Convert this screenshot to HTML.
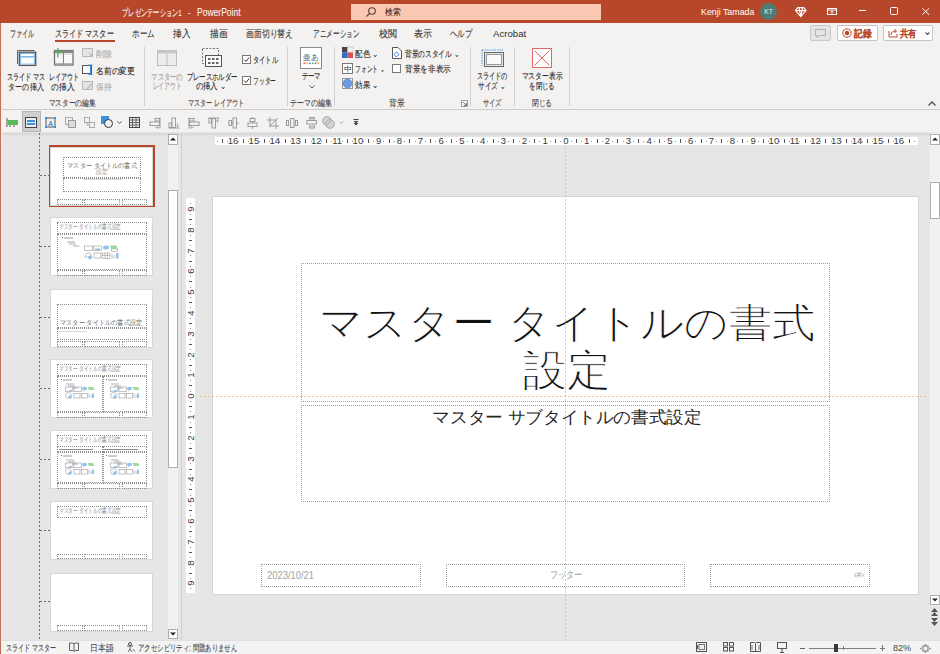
<!DOCTYPE html>
<html><head><meta charset="utf-8">
<style>
*{margin:0;padding:0;box-sizing:border-box}
html,body{width:940px;height:654px;overflow:hidden;background:#e6e6e6;font-family:"Liberation Sans",sans-serif;position:relative}
.a{position:absolute}
.t{position:absolute;white-space:nowrap;line-height:1}
svg{overflow:visible}
</style></head><body>

<div class="a" style="left:0px;top:0px;width:940px;height:23px;background:#b7472a"></div>
<div class="t" id="t1" style="left:122.3px;top:12.5px;font-size:9.5px;color:#ffffff;-webkit-text-stroke:0.1px #ffffff;transform-origin:0 50%;transform:translateY(-50%) scaleX(0.6254);">プレゼンテーション1</div>
<div class="t" id="t2" style="left:189.4px;top:12.5px;font-size:9.5px;color:#ffffff;transform-origin:50% 50%;transform:translate(-50%,-50%);">-</div>
<div class="t" id="t3" style="left:196.8px;top:12.5px;font-size:10px;color:#ffffff;transform-origin:0 50%;transform:translateY(-50%) scaleX(0.8526);">PowerPoint</div>
<div class="a" style="left:351px;top:4px;width:250px;height:16px;background:#fbc8b3"></div>
<svg class="a" style="left:365px;top:6px;" width="12" height="12" viewBox="0 0 12 12"><circle cx="7" cy="5" r="3.3" fill="none" stroke="#5a3a30" stroke-width="1.1"/><line x1="4.6" y1="7.4" x2="1.5" y2="10.5" stroke="#5a3a30" stroke-width="1.2"/></svg>
<div class="t" id="t4" style="left:385.3px;top:12px;font-size:9px;color:#4a2a20;-webkit-text-stroke:0.1px #4a2a20;transform-origin:0 50%;transform:translateY(-50%) scaleX(0.8722);">検索</div>
<div class="t" id="t5" style="left:700.6px;top:12px;font-size:9.5px;color:#ffffff;transform-origin:0 50%;transform:translateY(-50%) scaleX(0.9305);">Kenji Tamada</div>
<div class="a" style="left:760px;top:3px;width:17px;height:17px;border-radius:50%;background:#4e7b74"></div>
<div class="t" id="t6" style="left:768.5px;top:11.5px;font-size:6.5px;color:#e8f0ee;transform-origin:50% 50%;transform:translate(-50%,-50%);">KT</div>
<svg class="a" style="left:795px;top:7px;" width="11.5" height="10" viewBox="0 0 11.5 10"><path d="M2.8 0.6 L8.7 0.6 L11 3.6 L5.75 9.6 L0.5 3.6 Z M0.5 3.6 L11 3.6 M4 0.6 L5.75 9.6 L7.5 0.6" fill="none" stroke="#fff" stroke-width="1.1"/></svg>
<svg class="a" style="left:827px;top:7.5px;" width="10" height="7" viewBox="0 0 10 7"><rect x="0.5" y="0.5" width="9" height="6" fill="none" stroke="#fff" stroke-width="1"/><line x1="0.5" y1="2" x2="9.5" y2="2" stroke="#fff"/><path d="M3.5 4.5 L5 3 L6.5 4.5 M5 3 L5 6.5" fill="none" stroke="#fff" stroke-width="0.9"/></svg>
<div class="a" style="left:859px;top:10px;width:7px;height:1px;background:#fff"></div>
<div class="a" style="left:890px;top:7px;width:8px;height:7.5px;border:1px solid #fff;border-radius:1.5px"></div>
<svg class="a" style="left:921.6px;top:7.6px;" width="7.4" height="7" viewBox="0 0 7.4 7"><path d="M0.3 0.3 L7.1 6.7 M7.1 0.3 L0.3 6.7" stroke="#fff" stroke-width="1"/></svg>
<div class="a" style="left:0px;top:23px;width:940px;height:87px;background:#f3f2f1"></div>
<div class="t" id="t7" style="left:10.2px;top:34.2px;font-size:9.5px;color:#303030;-webkit-text-stroke:0.1px #303030;transform-origin:0 50%;transform:translateY(-50%) scaleX(0.6075);">ファイル</div>
<div class="t" id="t8" style="left:54.9px;top:34.2px;font-size:9.5px;color:#303030;-webkit-text-stroke:0.1px #303030;transform-origin:0 50%;transform:translateY(-50%) scaleX(0.7103);">スライド マスター</div>
<div class="t" id="t9" style="left:132.3px;top:34.2px;font-size:9.5px;color:#303030;-webkit-text-stroke:0.1px #303030;transform-origin:0 50%;transform:translateY(-50%) scaleX(0.7533);">ホーム</div>
<div class="t" id="t10" style="left:173.4px;top:34.2px;font-size:9.5px;color:#303030;-webkit-text-stroke:0.1px #303030;transform-origin:0 50%;transform:translateY(-50%) scaleX(0.8800);">挿入</div>
<div class="t" id="t11" style="left:209.6px;top:34.2px;font-size:9.5px;color:#303030;-webkit-text-stroke:0.1px #303030;transform-origin:0 50%;transform:translateY(-50%) scaleX(0.8700);">描画</div>
<div class="t" id="t12" style="left:246px;top:34.2px;font-size:9.5px;color:#303030;-webkit-text-stroke:0.1px #303030;transform-origin:0 50%;transform:translateY(-50%) scaleX(0.7867);">画面切り替え</div>
<div class="t" id="t13" style="left:312.8px;top:34.2px;font-size:9.5px;color:#303030;-webkit-text-stroke:0.1px #303030;transform-origin:0 50%;transform:translateY(-50%) scaleX(0.6629);">アニメーション</div>
<div class="t" id="t14" style="left:378.6px;top:34.2px;font-size:9.5px;color:#303030;-webkit-text-stroke:0.1px #303030;transform-origin:0 50%;transform:translateY(-50%) scaleX(0.8950);">校閲</div>
<div class="t" id="t15" style="left:414.1px;top:34.2px;font-size:9.5px;color:#303030;-webkit-text-stroke:0.1px #303030;transform-origin:0 50%;transform:translateY(-50%) scaleX(0.8950);">表示</div>
<div class="t" id="t16" style="left:450.1px;top:34.2px;font-size:9.5px;color:#303030;-webkit-text-stroke:0.1px #303030;transform-origin:0 50%;transform:translateY(-50%) scaleX(0.7400);">ヘルプ</div>
<div class="t" id="t17" style="left:492.7px;top:34.2px;font-size:9.5px;color:#303030;transform-origin:0 50%;transform:translateY(-50%) scaleX(1.0168);">Acrobat</div>
<div class="a" style="left:55px;top:40px;width:60px;height:2px;background:#b7472a"></div>
<div class="a" style="left:810px;top:25px;width:21px;height:16px;background:#e4e4e4;border:1px solid #c8c8c8;border-radius:2px"></div>
<svg class="a" style="left:815px;top:29px;" width="11" height="9" viewBox="0 0 11 9"><path d="M0.5 0.5 H10.5 V6.5 H4 L2 8.5 V6.5 H0.5 Z" fill="none" stroke="#b0b0b0"/></svg>
<div class="a" style="left:837px;top:25px;width:41px;height:16px;background:#fff;border:1px solid #c4c4c4;border-radius:2px"></div>
<svg class="a" style="left:842px;top:28px;" width="10" height="10" viewBox="0 0 10 10"><circle cx="5" cy="5" r="4.2" fill="none" stroke="#b7472a" stroke-width="1"/><circle cx="5" cy="5" r="2.2" fill="#b7472a"/></svg>
<div class="t" id="t18" style="left:853.6px;top:33.8px;font-size:9.5px;color:#b7472a;-webkit-text-stroke:0.1px #b7472a;transform-origin:0 50%;transform:translateY(-50%) scaleX(0.8650);font-weight:bold">記録</div>
<div class="a" style="left:883px;top:25px;width:50px;height:16px;background:#fff;border:1px solid #c4c4c4;border-radius:2px"></div>
<svg class="a" style="left:888px;top:27px;" width="11" height="11" viewBox="0 0 11 11"><path d="M1 4 V10 H9 V7" fill="none" stroke="#b7472a"/><path d="M3 8 C3 5 5 4 8 4 M6.5 2 L8.5 4 L6.5 6" fill="none" stroke="#b7472a"/></svg>
<div class="t" id="t19" style="left:900px;top:33.8px;font-size:9.5px;color:#b7472a;-webkit-text-stroke:0.1px #b7472a;transform-origin:0 50%;transform:translateY(-50%) scaleX(0.8300);font-weight:bold">共有</div>
<svg class="a" style="left:924.5px;top:31.5px;" width="5" height="3" viewBox="0 0 5 3"><path d="M0.5 0.5 L2.5 2.5 L4.5 0.5" fill="none" stroke="#555" stroke-width="1.1"/></svg>
<div class="a" style="left:144px;top:47px;width:1px;height:59px;background:#cfcfcf"></div>
<div class="a" style="left:287px;top:47px;width:1px;height:59px;background:#cfcfcf"></div>
<div class="a" style="left:334px;top:47px;width:1px;height:59px;background:#cfcfcf"></div>
<div class="a" style="left:470px;top:47px;width:1px;height:59px;background:#cfcfcf"></div>
<div class="a" style="left:514px;top:47px;width:1px;height:59px;background:#cfcfcf"></div>
<div class="a" style="left:569px;top:47px;width:1px;height:59px;background:#cfcfcf"></div>
<div class="t" id="t20" style="left:72.2px;top:103px;font-size:9px;color:#444;-webkit-text-stroke:0.1px #444;transform-origin:50% 50%;transform:translate(-50%,-50%) scaleX(0.7460);">マスターの編集</div>
<div class="t" id="t21" style="left:216.2px;top:103px;font-size:9px;color:#444;-webkit-text-stroke:0.1px #444;transform-origin:50% 50%;transform:translate(-50%,-50%) scaleX(0.6825);">マスター レイアウト</div>
<div class="t" id="t22" style="left:310.7px;top:103px;font-size:9px;color:#444;-webkit-text-stroke:0.1px #444;transform-origin:50% 50%;transform:translate(-50%,-50%) scaleX(0.7667);">テーマの編集</div>
<div class="t" id="t23" style="left:396.9px;top:103px;font-size:9px;color:#444;-webkit-text-stroke:0.1px #444;transform-origin:50% 50%;transform:translate(-50%,-50%) scaleX(0.8778);">背景</div>
<div class="t" id="t24" style="left:492.4px;top:103px;font-size:9px;color:#444;-webkit-text-stroke:0.1px #444;transform-origin:50% 50%;transform:translate(-50%,-50%) scaleX(0.6926);">サイズ</div>
<div class="t" id="t25" style="left:541.8px;top:103px;font-size:9px;color:#444;-webkit-text-stroke:0.1px #444;transform-origin:50% 50%;transform:translate(-50%,-50%) scaleX(0.7593);">閉じる</div>
<svg class="a" style="left:461px;top:100px;" width="7" height="7" viewBox="0 0 7 7"><path d="M0.5 0.5 H6.5 V6.5 H0.5 Z" fill="none" stroke="#888" stroke-width="0.8"/><path d="M2 2 L5.5 5.5 M5.5 3 V5.5 H3" fill="none" stroke="#666" stroke-width="0.8"/></svg>
<svg class="a" style="left:928px;top:101px;" width="8" height="5" viewBox="0 0 8 5"><path d="M0.5 4.5 L4 1 L7.5 4.5" fill="none" stroke="#505050" stroke-width="1.3"/></svg>
<div class="a" style="left:0px;top:109px;width:940px;height:1px;background:#cfcdcb"></div>
<svg class="a" style="left:16px;top:49px;" width="21" height="18" viewBox="0 0 21 18"><path d="M1.5 15 V1.5 H18.5" fill="none" stroke="#666" stroke-width="1"/><rect x="3.3" y="3.2" width="16.4" height="13.2" fill="#fff" stroke="#555" stroke-width="1.3"/><rect x="4.6" y="4.5" width="13.8" height="10.6" fill="none" stroke="#7db8ee" stroke-width="1"/><rect x="4.6" y="7" width="13.8" height="1.6" fill="#7db8ee"/></svg>
<div class="t" id="t26" style="left:26.2px;top:76.5px;font-size:9px;color:#262626;-webkit-text-stroke:0.1px #262626;transform-origin:50% 50%;transform:translate(-50%,-50%) scaleX(0.6812);">スライド マス</div>
<div class="t" id="t27" style="left:26.3px;top:87px;font-size:9px;color:#262626;-webkit-text-stroke:0.1px #262626;transform-origin:50% 50%;transform:translate(-50%,-50%) scaleX(0.7778);">ターの挿入</div>
<svg class="a" style="left:53px;top:48px;" width="21" height="19" viewBox="0 0 21 19"><rect x="1.5" y="2.5" width="18.5" height="14.5" fill="#f8f8f8" stroke="#666" stroke-width="1.2"/><rect x="1.5" y="2.5" width="18.5" height="2.5" fill="#8a8a8a"/><line x1="1.5" y1="6" x2="20" y2="6" stroke="#bbb" stroke-width="0.8"/><line x1="10.4" y1="5" x2="10.4" y2="17" stroke="#777"/><line x1="1.5" y1="15.8" x2="20" y2="15.8" stroke="#999" stroke-width="1"/><path d="M4.9 0 V9.5 M0 4.5 H10" stroke="#4caf50" stroke-width="1.2"/></svg>
<div class="t" id="t28" style="left:63.9px;top:76.5px;font-size:9px;color:#262626;-webkit-text-stroke:0.1px #262626;transform-origin:50% 50%;transform:translate(-50%,-50%) scaleX(0.6733);">レイアウト</div>
<div class="t" id="t29" style="left:63.4px;top:87px;font-size:9px;color:#262626;-webkit-text-stroke:0.1px #262626;transform-origin:50% 50%;transform:translate(-50%,-50%) scaleX(0.8556);">の挿入</div>
<svg class="a" style="left:82px;top:48px;" width="12" height="10" viewBox="0 0 12 10"><rect x="0.5" y="0.5" width="10" height="8" fill="#e4e4e4" stroke="#b8b8b8"/><path d="M7 5 L11 9 M11 5 L7 9" stroke="#b8b8b8"/></svg>
<div class="t" id="t30" style="left:95.7px;top:54px;font-size:9px;color:#a8a8a8;-webkit-text-stroke:0.1px #a8a8a8;transform-origin:0 50%;transform:translateY(-50%) scaleX(0.8889);">削除</div>
<svg class="a" style="left:82px;top:65px;" width="12" height="10" viewBox="0 0 12 10"><rect x="0.5" y="0.5" width="9" height="8" fill="#fafafa" stroke="#555"/><path d="M8.5 0 V9.5 M6.5 0 H10.5 M6.5 9.5 H10.5" stroke="#3d8fe0" stroke-width="1.1"/></svg>
<div class="t" id="t31" style="left:95.7px;top:70.7px;font-size:9px;color:#262626;-webkit-text-stroke:0.1px #262626;transform-origin:0 50%;transform:translateY(-50%) scaleX(0.8667);">名前の変更</div>
<svg class="a" style="left:82px;top:81px;" width="12" height="10" viewBox="0 0 12 10"><rect x="0.5" y="0.5" width="10" height="8" fill="#e4e4e4" stroke="#b8b8b8"/><path d="M5 8 L10 3" stroke="#b8b8b8" stroke-width="1.2"/></svg>
<div class="t" id="t32" style="left:95.7px;top:86.7px;font-size:9px;color:#a8a8a8;-webkit-text-stroke:0.1px #a8a8a8;transform-origin:0 50%;transform:translateY(-50%) scaleX(0.8611);">保持</div>
<svg class="a" style="left:157px;top:50px;" width="20" height="16" viewBox="0 0 20 16"><rect x="0.5" y="0.5" width="19" height="15" fill="#ececec" stroke="#bdbdbd"/><rect x="0.5" y="0.5" width="19" height="3" fill="#c8c8c8"/><line x1="10" y1="3.5" x2="10" y2="15.5" stroke="#bdbdbd"/></svg>
<div class="t" id="t33" style="left:166.8px;top:76.6px;font-size:9px;color:#a0a0a0;-webkit-text-stroke:0.1px #a0a0a0;transform-origin:50% 50%;transform:translate(-50%,-50%) scaleX(0.7000);">マスターの</div>
<div class="t" id="t34" style="left:167.2px;top:86px;font-size:9px;color:#a0a0a0;-webkit-text-stroke:0.1px #a0a0a0;transform-origin:50% 50%;transform:translate(-50%,-50%) scaleX(0.6422);">レイアウト</div>
<svg class="a" style="left:201px;top:48px;" width="22" height="20" viewBox="0 0 22 20"><rect x="1.5" y="0.5" width="16" height="15" fill="none" stroke="#777" stroke-dasharray="2,1.5"/><rect x="4.5" y="7.5" width="16" height="11" fill="#fafafa" stroke="#555"/><g fill="#666"><rect x="7" y="10" width="2.5" height="2"/><rect x="11" y="10" width="2.5" height="2"/><rect x="15" y="10" width="2.5" height="2"/><rect x="7" y="14" width="2.5" height="2"/><rect x="11" y="14" width="2.5" height="2"/><rect x="15" y="14" width="2.5" height="2"/></g></svg>
<div class="t" id="t35" style="left:211.5px;top:76.6px;font-size:9px;color:#262626;-webkit-text-stroke:0.1px #262626;transform-origin:50% 50%;transform:translate(-50%,-50%) scaleX(0.7083);">プレースホルダー</div>
<div class="t" id="t36" style="left:211.4px;top:86px;font-size:9px;color:#262626;-webkit-text-stroke:0.1px #262626;transform-origin:50% 50%;transform:translate(-50%,-50%) scaleX(0.8210);">の挿入 ⌄</div>
<div class="a" style="left:242px;top:55px;width:9px;height:9px;background:#fff;border:1px solid #777"></div>
<svg class="a" style="left:243px;top:56px;" width="7" height="7" viewBox="0 0 7 7"><path d="M1 3.5 L3 5.5 L6.2 1.5" fill="none" stroke="#333" stroke-width="1"/></svg>
<div class="t" id="t37" style="left:253px;top:60.4px;font-size:9px;color:#262626;-webkit-text-stroke:0.1px #262626;transform-origin:0 50%;transform:translateY(-50%) scaleX(0.6944);">タイトル</div>
<div class="a" style="left:242px;top:76px;width:9px;height:9px;background:#fff;border:1px solid #777"></div>
<svg class="a" style="left:243px;top:77px;" width="7" height="7" viewBox="0 0 7 7"><path d="M1 3.5 L3 5.5 L6.2 1.5" fill="none" stroke="#333" stroke-width="1"/></svg>
<div class="t" id="t38" style="left:253px;top:80.8px;font-size:9px;color:#262626;-webkit-text-stroke:0.1px #262626;transform-origin:0 50%;transform:translateY(-50%) scaleX(0.6389);">フッター</div>
<svg class="a" style="left:300px;top:47px;" width="22" height="22" viewBox="0 0 22 22"><rect x="0.5" y="0.5" width="21" height="21" fill="#fff" stroke="#8a8a8a"/><g><rect x="3.5" y="15.5" width="1.6" height="1.6" fill="#d9534f"/><rect x="6.3" y="15.5" width="1.6" height="1.6" fill="#e8a33d"/><rect x="9.1" y="15.5" width="1.6" height="1.6" fill="#3c8dde"/><rect x="11.9" y="15.5" width="1.6" height="1.6" fill="#6ab04c"/><rect x="14.7" y="15.5" width="1.6" height="1.6" fill="#3c8dde"/><rect x="17.5" y="15.5" width="1.6" height="1.6" fill="#e8a33d"/></g></svg>
<div class="t" id="t39" style="left:311px;top:58px;font-size:7.5px;color:#555;transform-origin:50% 50%;transform:translate(-50%,-50%) scaleX(0.9688);-webkit-text-stroke:0">亜あ</div>
<div class="t" id="t40" style="left:310.5px;top:76.4px;font-size:9px;color:#262626;-webkit-text-stroke:0.1px #262626;transform-origin:50% 50%;transform:translate(-50%,-50%) scaleX(0.7037);">テーマ</div>
<svg class="a" style="left:309px;top:85px;" width="6" height="4" viewBox="0 0 6 4"><path d="M0.5 0.5 L3 3 L5.5 0.5" fill="none" stroke="#555"/></svg>
<svg class="a" style="left:342px;top:47px;" width="11" height="11" viewBox="0 0 11 11"><rect x="0" y="0" width="5.5" height="5.5" fill="#444"/><rect x="5.5" y="0" width="5.5" height="5.5" fill="#f2f2f2" stroke="#aaa" stroke-width="0.5"/><rect x="0" y="5.5" width="5.5" height="5.5" fill="#2f6fc6"/><rect x="5.5" y="5.5" width="5.5" height="5.5" fill="#d9534f"/></svg>
<div class="t" id="t41" style="left:354.7px;top:53.7px;font-size:9px;color:#262626;-webkit-text-stroke:0.1px #262626;transform-origin:0 50%;transform:translateY(-50%) scaleX(0.8346);">配色 ⌄</div>
<svg class="a" style="left:342px;top:63px;" width="11" height="11" viewBox="0 0 11 11"><rect x="0.5" y="0.5" width="10" height="10" fill="#fff" stroke="#777"/><text x="5.5" y="8.5" font-size="8" text-anchor="middle" fill="#333">中</text></svg>
<div class="t" id="t42" style="left:354.7px;top:69.3px;font-size:9px;color:#262626;-webkit-text-stroke:0.1px #262626;transform-origin:0 50%;transform:translateY(-50%) scaleX(0.6428);">フォント ⌄</div>
<svg class="a" style="left:342px;top:78px;" width="11" height="11" viewBox="0 0 11 11"><rect x="0.5" y="0.5" width="10" height="10" fill="#fff" stroke="#999"/><circle cx="5.5" cy="5.5" r="4.5" fill="#6d9be0" stroke="#4a7cc8" stroke-width="0.6"/></svg>
<div class="t" id="t43" style="left:354.7px;top:84.5px;font-size:9px;color:#262626;-webkit-text-stroke:0.1px #262626;transform-origin:0 50%;transform:translateY(-50%) scaleX(0.8346);">効果 ⌄</div>
<svg class="a" style="left:392px;top:47px;" width="10" height="12" viewBox="0 0 10 12"><path d="M0.5 0.5 H6 L9.5 4 V11.5 H0.5 Z" fill="#fff" stroke="#555"/><path d="M2 7 L5 5 L7 8 L4 10 Z" fill="none" stroke="#3d8fe0" stroke-width="0.9"/></svg>
<div class="t" id="t44" style="left:404.8px;top:54.1px;font-size:9px;color:#262626;-webkit-text-stroke:0.1px #262626;transform-origin:0 50%;transform:translateY(-50%) scaleX(0.7427);">背景のスタイル ⌄</div>
<div class="a" style="left:392px;top:64px;width:9px;height:9px;background:#fff;border:1px solid #777"></div>
<div class="t" id="t45" style="left:404.8px;top:69.3px;font-size:9px;color:#262626;-webkit-text-stroke:0.1px #262626;transform-origin:0 50%;transform:translateY(-50%) scaleX(0.8500);">背景を非表示</div>
<svg class="a" style="left:481px;top:49px;" width="23" height="18" viewBox="0 0 23 18"><rect x="3.5" y="3.5" width="19" height="14" fill="#e6e6e6" stroke="#666"/><rect x="5.5" y="5.5" width="15" height="10" fill="#fafafa" stroke="#999"/><path d="M1 1 H22 M1 1 V17" stroke="#3d8fe0" stroke-width="1" stroke-dasharray="1.5,1"/></svg>
<div class="t" id="t46" style="left:492.4px;top:76px;font-size:9px;color:#262626;-webkit-text-stroke:0.1px #262626;transform-origin:50% 50%;transform:translate(-50%,-50%) scaleX(0.6822);">スライドの</div>
<div class="t" id="t47" style="left:492.4px;top:86px;font-size:9px;color:#262626;-webkit-text-stroke:0.1px #262626;transform-origin:50% 50%;transform:translate(-50%,-50%) scaleX(0.7277);">サイズ ⌄</div>
<svg class="a" style="left:532px;top:48px;" width="20" height="20" viewBox="0 0 20 20"><rect x="0.5" y="0.5" width="19" height="19" fill="#fff" stroke="#e06666"/><path d="M2.5 2.5 L17.5 17.5 M17.5 2.5 L2.5 17.5" stroke="#e06666" stroke-width="1"/></svg>
<div class="t" id="t48" style="left:541.7px;top:76px;font-size:9px;color:#262626;-webkit-text-stroke:0.1px #262626;transform-origin:50% 50%;transform:translate(-50%,-50%) scaleX(0.7537);">マスター表示</div>
<div class="t" id="t49" style="left:542px;top:86px;font-size:9px;color:#262626;-webkit-text-stroke:0.1px #262626;transform-origin:50% 50%;transform:translate(-50%,-50%) scaleX(0.7222);">を閉じる</div>
<div class="a" style="left:0px;top:110px;width:940px;height:22px;background:#f3f2f1"></div>
<div class="a" style="left:0px;top:132.5px;width:940px;height:4px;background:linear-gradient(#d6d6d6,#e6e6e6)"></div>
<div class="a" style="left:22px;top:111px;width:19px;height:21px;background:#cfcfcf;border:1px solid #b5b5b5"></div>
<svg class="a" style="left:6px;top:117px;" width="12" height="11" viewBox="0 0 12 11"><rect x="2" y="3" width="10" height="5" fill="#5cb85c"/><path d="M1 1 V10 M4 8 V10 M8 8 V10" stroke="#555" stroke-width="1"/></svg>
<svg class="a" style="left:25px;top:117px;" width="12" height="11" viewBox="0 0 12 11"><rect x="0.5" y="0.5" width="11" height="10" fill="#eee" stroke="#444"/><rect x="2" y="3" width="8" height="2" fill="#3d8fe0"/><rect x="2" y="6" width="8" height="2" fill="#3d8fe0"/></svg>
<svg class="a" style="left:45px;top:117px;" width="11" height="11" viewBox="0 0 11 11"><rect x="1" y="1" width="9" height="9" fill="none" stroke="#555"/><text x="5.5" y="8.5" font-size="7" text-anchor="middle" fill="#3d8fe0" font-weight="bold">A</text><g fill="#3d8fe0"><rect x="0" y="0" width="2" height="2"/><rect x="9" y="0" width="2" height="2"/><rect x="0" y="9" width="2" height="2"/><rect x="9" y="9" width="2" height="2"/></g></svg>
<svg class="a" style="left:65px;top:117px;" width="11" height="11" viewBox="0 0 11 11"><rect x="0.5" y="0.5" width="7" height="7" fill="none" stroke="#aaa"/><rect x="3.5" y="3.5" width="7" height="7" fill="#ddd" stroke="#999"/></svg>
<svg class="a" style="left:84px;top:117px;" width="11" height="11" viewBox="0 0 11 11"><rect x="0.5" y="0.5" width="5" height="5" fill="none" stroke="#aaa"/><rect x="5.5" y="5.5" width="5" height="5" fill="none" stroke="#aaa"/><path d="M3 5.5 V8 H5.5" fill="none" stroke="#aaa"/></svg>
<svg class="a" style="left:101px;top:116px;" width="12" height="12" viewBox="0 0 12 12"><rect x="0" y="0" width="8" height="8" fill="#3d8fe0"/><circle cx="7.5" cy="7.5" r="4" fill="#f3f3f3" stroke="#333" stroke-width="1"/></svg>
<svg class="a" style="left:117px;top:121px;" width="5" height="3" viewBox="0 0 5 3"><path d="M0.5 0.5 L2.5 2.5 L4.5 0.5" fill="none" stroke="#555"/></svg>
<svg class="a" style="left:129px;top:117px;" width="11" height="11" viewBox="0 0 11 11"><rect x="0.5" y="0.5" width="10" height="10" fill="none" stroke="#444"/><path d="M0.5 3 H10.5 M0.5 5.5 H10.5 M0.5 8 H10.5 M3.5 0.5 V10.5 M7 0.5 V10.5" stroke="#444" stroke-width="0.8"/></svg>
<svg class="a" style="left:148.5px;top:117px;" width="12" height="12" viewBox="0 0 12 12"><g fill="none" stroke="#9c9c9c" stroke-width="1"><path d="M11 0.5 V11.5"/><rect x="6" y="1.5" width="4.5" height="2.5"/><rect x="1" y="5" width="9.5" height="3.5"/><path d="M6 10.5 H9.5 M8 9 L9.5 10.5 L8 12" stroke-width="0.7"/></g></svg>
<svg class="a" style="left:168px;top:117px;" width="12" height="12" viewBox="0 0 12 12"><g fill="none" stroke="#9c9c9c" stroke-width="1"><path d="M0.5 11 H11.5"/><rect x="4" y="1" width="3.5" height="9.5"/><rect x="1" y="6" width="2.5" height="4.5"/><path d="M9.5 6 V10 M8 8.5 L9.5 10 L11 8.5" stroke-width="0.7"/></g></svg>
<svg class="a" style="left:188px;top:117px;" width="12" height="12" viewBox="0 0 12 12"><g fill="none" stroke="#9c9c9c" stroke-width="1"><path d="M1 0.5 V11.5"/><rect x="1.5" y="1.5" width="4.5" height="2.5"/><rect x="1.5" y="5" width="9.5" height="3.5"/><path d="M2.5 10.5 H6 M4 9 L2.5 10.5 L4 12" stroke-width="0.7"/></g></svg>
<svg class="a" style="left:207.5px;top:117px;" width="12" height="12" viewBox="0 0 12 12"><g fill="none" stroke="#9c9c9c" stroke-width="1"><path d="M0.5 1 H11.5"/><rect x="4" y="1.5" width="3.5" height="9.5"/><rect x="1" y="1.5" width="2.5" height="4.5"/><path d="M9.5 2.5 V6 M8 4 L9.5 2.5 L11 4" stroke-width="0.7"/></g></svg>
<svg class="a" style="left:227.5px;top:117px;" width="12" height="12" viewBox="0 0 12 12"><g fill="none" stroke="#9c9c9c" stroke-width="1"><path d="M0 6 H11"/><rect x="1" y="3.5" width="2.5" height="5" fill="#f3f3f3"/><rect x="5" y="1" width="3.5" height="10" fill="#f3f3f3"/></g></svg>
<svg class="a" style="left:247px;top:117px;" width="12" height="12" viewBox="0 0 12 12"><g fill="none" stroke="#9c9c9c" stroke-width="1"><path d="M5.5 0 V12"/><rect x="3" y="1.5" width="5" height="3" fill="#f3f3f3"/><rect x="1" y="6" width="9" height="3.5" fill="#f3f3f3"/></g></svg>
<svg class="a" style="left:267px;top:117px;" width="12" height="12" viewBox="0 0 12 12"><g fill="none" stroke="#9c9c9c" stroke-width="1"><path d="M3 0 V9 H12 M0 3 H9 V12 M2 10 L11 1"/></g></svg>
<svg class="a" style="left:286px;top:117px;" width="12" height="12" viewBox="0 0 12 12"><g fill="none" stroke="#9c9c9c" stroke-width="1"><rect x="0.5" y="3.5" width="2" height="5"/><rect x="4.5" y="1.5" width="3.5" height="9"/><rect x="9.5" y="3.5" width="2" height="5"/></g></svg>
<svg class="a" style="left:306px;top:117px;" width="12" height="12" viewBox="0 0 12 12"><g fill="none" stroke="#9c9c9c" stroke-width="1"><rect x="3.5" y="0.5" width="5" height="1.5"/><rect x="1" y="3.5" width="9.5" height="3.5"/><rect x="3.5" y="9" width="5" height="2"/></g></svg>
<svg class="a" style="left:322px;top:116px;" width="13" height="13" viewBox="0 0 13 13"><circle cx="5" cy="5" r="4.3" fill="#d4d4d4" stroke="#a8a8a8"/><circle cx="8" cy="8" r="4.3" fill="#d4d4d4" stroke="#a8a8a8"/><path d="M4.5 9.5 L9.5 4.5" stroke="#a8a8a8"/></svg>
<svg class="a" style="left:338.5px;top:121px;" width="5" height="3" viewBox="0 0 5 3"><path d="M0.5 0.5 L2.5 2.5 L4.5 0.5" fill="none" stroke="#aaa"/></svg>
<svg class="a" style="left:353px;top:119px;" width="6" height="7" viewBox="0 0 6 7"><path d="M0.5 0.5 H5.5" stroke="#444" stroke-width="1"/><path d="M0.5 2 H5.5 L3 4.5 Z M0.5 4 H5.5 L3 6.5 Z" fill="#444"/></svg>
<div class="a" style="left:181px;top:133px;width:1px;height:507px;background:#d0d0d0"></div>
<div class="a" style="left:39px;top:133px;width:1px;height:507px;background:repeating-linear-gradient(to bottom,#6a6a6a 0 2px,transparent 2px 4px)"></div>
<div class="a" style="left:168px;top:134px;width:10px;height:505px;background:#f0f0f0"></div>
<div class="a" style="left:168px;top:134px;width:10px;height:11px;background:#fff;border:1px solid #adadad"></div>
<svg class="a" style="left:170px;top:137px;" width="6" height="4" viewBox="0 0 6 4"><path d="M0 3.5 L3 0.5 L6 3.5 Z" fill="#222"/></svg>
<div class="a" style="left:168px;top:190px;width:10px;height:278px;background:#fff;border:1px solid #adadad"></div>
<div class="a" style="left:168px;top:629px;width:10px;height:10px;background:#fff;border:1px solid #adadad"></div>
<svg class="a" style="left:170px;top:632px;" width="6" height="4" viewBox="0 0 6 4"><path d="M0 0.5 L3 3.5 L6 0.5 Z" fill="#222"/></svg>
<div class="a" style="left:48.9px;top:145.4px;width:106px;height:61.2px;border:2px solid #b7472a;background:#fff"></div>
<div class="a" style="left:50.9px;top:147.4px;width:102px;height:57.2px;background:#fff"></div>
<div class="a" style="left:51.2px;top:147.5px;width:101px;height:57px;background:#fff;box-shadow:0 0 0 1px #d8d8d8"></div>
<div class="a" style="left:40px;top:175.0px;width:10px;height:1px;background:repeating-linear-gradient(to right,#6a6a6a 0 2px,transparent 2px 4px)"></div>
<div class="a" style="left:57.2px;top:199.2px;width:25.6px;height:5.5px;border:1px dotted #8e8e8e"></div>
<div class="a" style="left:84.1px;top:199.2px;width:35.7px;height:5.5px;border:1px dotted #8e8e8e"></div>
<div class="a" style="left:121.7px;top:199.2px;width:24.9px;height:5.5px;border:1px dotted #8e8e8e"></div>
<div class="a" style="left:63.400000000000006px;top:157.0px;width:78.1px;height:20.8px;border:1px dotted #8e8e8e"></div>
<div class="a" style="left:63.400000000000006px;top:177.8px;width:78.1px;height:14px;border:1px dotted #8e8e8e"></div>
<div class="t" id="t50" style="left:102.2px;top:165.3px;font-size:7px;color:#707070;transform-origin:50% 50%;transform:translate(-50%,-50%) scaleX(0.8815);">マスター タイトルの書式</div>
<div class="t" id="t51" style="left:101.80000000000001px;top:172.1px;font-size:6.5px;color:#9a9a9a;transform-origin:50% 50%;transform:translate(-50%,-50%) scaleX(0.8357);">設定</div>
<div class="a" style="left:83.4px;top:178.7px;width:38.3px;height:1px;background:#d4d4d4"></div>
<div class="a" style="left:51.2px;top:218.4px;width:101px;height:57px;background:#fff;box-shadow:0 0 0 1px #d8d8d8"></div>
<div class="a" style="left:40px;top:245.9px;width:10px;height:1px;background:repeating-linear-gradient(to right,#6a6a6a 0 2px,transparent 2px 4px)"></div>
<div class="a" style="left:57.2px;top:270.1px;width:25.6px;height:5.5px;border:1px dotted #8e8e8e"></div>
<div class="a" style="left:84.1px;top:270.1px;width:35.7px;height:5.5px;border:1px dotted #8e8e8e"></div>
<div class="a" style="left:121.7px;top:270.1px;width:24.9px;height:5.5px;border:1px dotted #8e8e8e"></div>
<div class="a" style="left:57.2px;top:222.0px;width:89.4px;height:12.3px;border:1px dotted #8e8e8e"></div>
<div class="t" id="t52" style="left:59.1px;top:227.3px;font-size:6.5px;color:#909090;transform-origin:0 50%;transform:translateY(-50%) scaleX(0.6680);">マスター タイトルの書式設定</div>
<div class="a" style="left:57.2px;top:234.3px;width:89.4px;height:35.800000000000004px;border:1px dotted #8e8e8e"></div>
<div class="a" style="left:61.7px;top:237.3px;width:1.2px;height:1.2px;background:#666"></div>
<div class="a" style="left:63.900000000000006px;top:236.70000000000002px;width:9px;height:2.4px;background:#c9ccd3"></div>
<div class="a" style="left:66.7px;top:241.1px;width:8px;height:1.8px;background:#d5d7dc"></div>
<div class="a" style="left:69.2px;top:243.1px;width:7px;height:1.8px;background:#d5d7dc"></div>
<div class="a" style="left:72.7px;top:245.3px;width:6px;height:1.6px;background:#d5d7dc"></div>
<svg class="a" style="left:84.2px;top:244.8px;" width="36" height="14" viewBox="0 0 36 14"><g fill="none" stroke="#9a9a9a" stroke-width="0.6"><rect x="0.5" y="1" width="8" height="4.5"/><rect x="9.5" y="1" width="8" height="4.5"/><path d="M1 12 L3 8 H6 L8 12 Z"/><rect x="10" y="8" width="7" height="5"/><rect x="18" y="8" width="8" height="5.5"/><path d="M21 8 V13.5 M23.5 8 V13.5 M18 10.5 H26 M28 9 V13.5 M30 10 V13.5"/><rect x="27.5" y="4" width="6" height="2.5"/></g><g fill="#8ec3ef"><ellipse cx="22" cy="2.5" rx="3" ry="2"/><circle cx="6" cy="12.5" r="2"/><rect x="32" y="8" width="2.5" height="5.5"/><rect x="11" y="3.5" width="5" height="1.5"/></g><path d="M25.5 0.5 H32 L34 4 H27.5 Z" fill="#9fd89f"/></svg>
<div class="a" style="left:51.2px;top:289.6px;width:101px;height:57px;background:#fff;box-shadow:0 0 0 1px #d8d8d8"></div>
<div class="a" style="left:40px;top:317.1px;width:10px;height:1px;background:repeating-linear-gradient(to right,#6a6a6a 0 2px,transparent 2px 4px)"></div>
<div class="a" style="left:57.2px;top:341.3px;width:25.6px;height:5.5px;border:1px dotted #8e8e8e"></div>
<div class="a" style="left:84.1px;top:341.3px;width:35.7px;height:5.5px;border:1px dotted #8e8e8e"></div>
<div class="a" style="left:121.7px;top:341.3px;width:24.9px;height:5.5px;border:1px dotted #8e8e8e"></div>
<div class="a" style="left:57.2px;top:303.6px;width:89.4px;height:24.7px;border:1px dotted #8e8e8e"></div>
<div class="t" id="t53" style="left:59.800000000000004px;top:322.1px;font-size:7px;color:#707070;transform-origin:0 50%;transform:translateY(-50%) scaleX(0.8843);">マスター タイトルの書式設定</div>
<div class="a" style="left:57.2px;top:328.3px;width:89.4px;height:11.7px;border:1px dotted #8e8e8e"></div>
<div class="a" style="left:59.2px;top:330.6px;width:28px;height:1px;background:#dadada"></div>
<div class="a" style="left:51.2px;top:360.4px;width:101px;height:57px;background:#fff;box-shadow:0 0 0 1px #d8d8d8"></div>
<div class="a" style="left:40px;top:387.9px;width:10px;height:1px;background:repeating-linear-gradient(to right,#6a6a6a 0 2px,transparent 2px 4px)"></div>
<div class="a" style="left:57.2px;top:412.09999999999997px;width:25.6px;height:5.5px;border:1px dotted #8e8e8e"></div>
<div class="a" style="left:84.1px;top:412.09999999999997px;width:35.7px;height:5.5px;border:1px dotted #8e8e8e"></div>
<div class="a" style="left:121.7px;top:412.09999999999997px;width:24.9px;height:5.5px;border:1px dotted #8e8e8e"></div>
<div class="a" style="left:57.2px;top:364.0px;width:89.4px;height:12.3px;border:1px dotted #8e8e8e"></div>
<div class="t" id="t54" style="left:59.1px;top:369.29999999999995px;font-size:6.5px;color:#909090;transform-origin:0 50%;transform:translateY(-50%) scaleX(0.6680);">マスター タイトルの書式設定</div>
<div class="a" style="left:57.2px;top:376.29999999999995px;width:45.4px;height:35.800000000000004px;border:1px dotted #8e8e8e"></div>
<div class="a" style="left:60.7px;top:379.29999999999995px;width:1.2px;height:1.2px;background:#666"></div>
<div class="a" style="left:62.900000000000006px;top:378.7px;width:9px;height:2.4px;background:#c9ccd3"></div>
<div class="a" style="left:65.7px;top:383.09999999999997px;width:8px;height:1.8px;background:#d5d7dc"></div>
<div class="a" style="left:68.2px;top:385.09999999999997px;width:7px;height:1.8px;background:#d5d7dc"></div>
<div class="a" style="left:71.7px;top:387.29999999999995px;width:6px;height:1.6px;background:#d5d7dc"></div>
<svg class="a" style="left:64.9px;top:386.29999999999995px;" width="30" height="13" viewBox="0 0 30 13"><g fill="none" stroke="#9a9a9a" stroke-width="0.6"><rect x="0.5" y="1" width="7.5" height="4.5"/><rect x="9" y="1" width="7.5" height="4.5"/><circle cx="3.5" cy="9.5" r="3"/><rect x="9" y="7.5" width="6" height="4.5"/><rect x="16.5" y="7.5" width="6" height="4.5"/><path d="M18 5.5 L21 2.5 M24 7.5 V12 M26 9 V12"/></g><g fill="#8ec3ef"><ellipse cx="19.5" cy="2.5" rx="2.5" ry="1.8"/><circle cx="5" cy="11" r="1.8"/><rect x="27" y="7.5" width="2" height="4.5"/><rect x="4" y="4" width="3" height="1.5"/></g><path d="M22.5 1 H28 L29.5 4 H24 Z" fill="#9fd89f"/></svg>
<div class="a" style="left:102.6px;top:376.29999999999995px;width:44.00000000000001px;height:35.800000000000004px;border:1px dotted #8e8e8e"></div>
<div class="a" style="left:106.1px;top:379.29999999999995px;width:1.2px;height:1.2px;background:#666"></div>
<div class="a" style="left:108.3px;top:378.7px;width:9px;height:2.4px;background:#c9ccd3"></div>
<div class="a" style="left:111.1px;top:383.09999999999997px;width:8px;height:1.8px;background:#d5d7dc"></div>
<div class="a" style="left:113.6px;top:385.09999999999997px;width:7px;height:1.8px;background:#d5d7dc"></div>
<div class="a" style="left:117.1px;top:387.29999999999995px;width:6px;height:1.6px;background:#d5d7dc"></div>
<svg class="a" style="left:109.6px;top:386.29999999999995px;" width="30" height="13" viewBox="0 0 30 13"><g fill="none" stroke="#9a9a9a" stroke-width="0.6"><rect x="0.5" y="1" width="7.5" height="4.5"/><rect x="9" y="1" width="7.5" height="4.5"/><circle cx="3.5" cy="9.5" r="3"/><rect x="9" y="7.5" width="6" height="4.5"/><rect x="16.5" y="7.5" width="6" height="4.5"/><path d="M18 5.5 L21 2.5 M24 7.5 V12 M26 9 V12"/></g><g fill="#8ec3ef"><ellipse cx="19.5" cy="2.5" rx="2.5" ry="1.8"/><circle cx="5" cy="11" r="1.8"/><rect x="27" y="7.5" width="2" height="4.5"/><rect x="4" y="4" width="3" height="1.5"/></g><path d="M22.5 1 H28 L29.5 4 H24 Z" fill="#9fd89f"/></svg>
<div class="a" style="left:51.2px;top:431.3px;width:101px;height:57px;background:#fff;box-shadow:0 0 0 1px #d8d8d8"></div>
<div class="a" style="left:40px;top:458.8px;width:10px;height:1px;background:repeating-linear-gradient(to right,#6a6a6a 0 2px,transparent 2px 4px)"></div>
<div class="a" style="left:57.2px;top:483.0px;width:25.6px;height:5.5px;border:1px dotted #8e8e8e"></div>
<div class="a" style="left:84.1px;top:483.0px;width:35.7px;height:5.5px;border:1px dotted #8e8e8e"></div>
<div class="a" style="left:121.7px;top:483.0px;width:24.9px;height:5.5px;border:1px dotted #8e8e8e"></div>
<div class="a" style="left:57.2px;top:434.90000000000003px;width:89.4px;height:12.3px;border:1px dotted #8e8e8e"></div>
<div class="t" id="t55" style="left:59.1px;top:440.2px;font-size:6.5px;color:#909090;transform-origin:0 50%;transform:translateY(-50%) scaleX(0.6680);">マスター タイトルの書式設定</div>
<div class="a" style="left:57.2px;top:446.0px;width:45.4px;height:6.3px;border:1px dotted #8e8e8e"></div>
<div class="a" style="left:102.6px;top:446.0px;width:44px;height:6.3px;border:1px dotted #8e8e8e"></div>
<div class="a" style="left:59.2px;top:448.8px;width:34px;height:1.5px;background:#8a8a8a"></div>
<div class="a" style="left:104.2px;top:448.8px;width:34px;height:1.5px;background:#8a8a8a"></div>
<div class="a" style="left:57.2px;top:452.3px;width:45.4px;height:30.700000000000003px;border:1px dotted #8e8e8e"></div>
<div class="a" style="left:60.7px;top:455.3px;width:1.2px;height:1.2px;background:#666"></div>
<div class="a" style="left:62.900000000000006px;top:454.70000000000005px;width:9px;height:2.4px;background:#c9ccd3"></div>
<div class="a" style="left:65.7px;top:459.1px;width:8px;height:1.8px;background:#d5d7dc"></div>
<div class="a" style="left:68.2px;top:461.1px;width:7px;height:1.8px;background:#d5d7dc"></div>
<div class="a" style="left:71.7px;top:463.3px;width:6px;height:1.6px;background:#d5d7dc"></div>
<svg class="a" style="left:64.9px;top:462.3px;" width="30" height="13" viewBox="0 0 30 13"><g fill="none" stroke="#9a9a9a" stroke-width="0.6"><rect x="0.5" y="1" width="7.5" height="4.5"/><rect x="9" y="1" width="7.5" height="4.5"/><circle cx="3.5" cy="9.5" r="3"/><rect x="9" y="7.5" width="6" height="4.5"/><rect x="16.5" y="7.5" width="6" height="4.5"/><path d="M18 5.5 L21 2.5 M24 7.5 V12 M26 9 V12"/></g><g fill="#8ec3ef"><ellipse cx="19.5" cy="2.5" rx="2.5" ry="1.8"/><circle cx="5" cy="11" r="1.8"/><rect x="27" y="7.5" width="2" height="4.5"/><rect x="4" y="4" width="3" height="1.5"/></g><path d="M22.5 1 H28 L29.5 4 H24 Z" fill="#9fd89f"/></svg>
<div class="a" style="left:102.6px;top:452.3px;width:44.00000000000001px;height:30.700000000000003px;border:1px dotted #8e8e8e"></div>
<div class="a" style="left:106.1px;top:455.3px;width:1.2px;height:1.2px;background:#666"></div>
<div class="a" style="left:108.3px;top:454.70000000000005px;width:9px;height:2.4px;background:#c9ccd3"></div>
<div class="a" style="left:111.1px;top:459.1px;width:8px;height:1.8px;background:#d5d7dc"></div>
<div class="a" style="left:113.6px;top:461.1px;width:7px;height:1.8px;background:#d5d7dc"></div>
<div class="a" style="left:117.1px;top:463.3px;width:6px;height:1.6px;background:#d5d7dc"></div>
<svg class="a" style="left:109.6px;top:462.3px;" width="30" height="13" viewBox="0 0 30 13"><g fill="none" stroke="#9a9a9a" stroke-width="0.6"><rect x="0.5" y="1" width="7.5" height="4.5"/><rect x="9" y="1" width="7.5" height="4.5"/><circle cx="3.5" cy="9.5" r="3"/><rect x="9" y="7.5" width="6" height="4.5"/><rect x="16.5" y="7.5" width="6" height="4.5"/><path d="M18 5.5 L21 2.5 M24 7.5 V12 M26 9 V12"/></g><g fill="#8ec3ef"><ellipse cx="19.5" cy="2.5" rx="2.5" ry="1.8"/><circle cx="5" cy="11" r="1.8"/><rect x="27" y="7.5" width="2" height="4.5"/><rect x="4" y="4" width="3" height="1.5"/></g><path d="M22.5 1 H28 L29.5 4 H24 Z" fill="#9fd89f"/></svg>
<div class="a" style="left:51.2px;top:502.2px;width:101px;height:57px;background:#fff;box-shadow:0 0 0 1px #d8d8d8"></div>
<div class="a" style="left:40px;top:529.7px;width:10px;height:1px;background:repeating-linear-gradient(to right,#6a6a6a 0 2px,transparent 2px 4px)"></div>
<div class="a" style="left:57.2px;top:553.9px;width:25.6px;height:5.5px;border:1px dotted #8e8e8e"></div>
<div class="a" style="left:84.1px;top:553.9px;width:35.7px;height:5.5px;border:1px dotted #8e8e8e"></div>
<div class="a" style="left:121.7px;top:553.9px;width:24.9px;height:5.5px;border:1px dotted #8e8e8e"></div>
<div class="a" style="left:57.2px;top:505.8px;width:89.4px;height:12.3px;border:1px dotted #8e8e8e"></div>
<div class="t" id="t56" style="left:59.1px;top:511.09999999999997px;font-size:6.5px;color:#909090;transform-origin:0 50%;transform:translateY(-50%) scaleX(0.6680);">マスター タイトルの書式設定</div>
<div class="a" style="left:51.2px;top:573.6px;width:101px;height:57px;background:#fff;box-shadow:0 0 0 1px #d8d8d8"></div>
<div class="a" style="left:40px;top:601.1px;width:10px;height:1px;background:repeating-linear-gradient(to right,#6a6a6a 0 2px,transparent 2px 4px)"></div>
<div class="a" style="left:57.2px;top:625.3000000000001px;width:25.6px;height:5.5px;border:1px dotted #8e8e8e"></div>
<div class="a" style="left:84.1px;top:625.3000000000001px;width:35.7px;height:5.5px;border:1px dotted #8e8e8e"></div>
<div class="a" style="left:121.7px;top:625.3000000000001px;width:24.9px;height:5.5px;border:1px dotted #8e8e8e"></div>
<div class="a" style="left:215px;top:137px;width:703px;height:8px;background:#fff"></div>
<div class="a" style="left:217.0px;top:140.5px;width:1px;height:1px;background:#8a8a8a"></div><div class="a" style="left:222.2px;top:139.2px;width:1px;height:3.5px;background:#555"></div><div class="a" style="left:227.4px;top:140.5px;width:1px;height:1px;background:#8a8a8a"></div><div class="t" style="left:233.1px;top:141px;font-size:9.5px;color:#3a3a3a;transform:translate(-50%,-50%)">16</div><div class="a" style="left:237.8px;top:140.5px;width:1px;height:1px;background:#8a8a8a"></div><div class="a" style="left:243.0px;top:139.2px;width:1px;height:3.5px;background:#555"></div><div class="a" style="left:248.2px;top:140.5px;width:1px;height:1px;background:#8a8a8a"></div><div class="t" style="left:253.9px;top:141px;font-size:9.5px;color:#3a3a3a;transform:translate(-50%,-50%)">15</div><div class="a" style="left:258.6px;top:140.5px;width:1px;height:1px;background:#8a8a8a"></div><div class="a" style="left:263.8px;top:139.2px;width:1px;height:3.5px;background:#555"></div><div class="a" style="left:269.0px;top:140.5px;width:1px;height:1px;background:#8a8a8a"></div><div class="t" style="left:274.7px;top:141px;font-size:9.5px;color:#3a3a3a;transform:translate(-50%,-50%)">14</div><div class="a" style="left:279.4px;top:140.5px;width:1px;height:1px;background:#8a8a8a"></div><div class="a" style="left:284.6px;top:139.2px;width:1px;height:3.5px;background:#555"></div><div class="a" style="left:289.8px;top:140.5px;width:1px;height:1px;background:#8a8a8a"></div><div class="t" style="left:295.5px;top:141px;font-size:9.5px;color:#3a3a3a;transform:translate(-50%,-50%)">13</div><div class="a" style="left:300.2px;top:140.5px;width:1px;height:1px;background:#8a8a8a"></div><div class="a" style="left:305.4px;top:139.2px;width:1px;height:3.5px;background:#555"></div><div class="a" style="left:310.6px;top:140.5px;width:1px;height:1px;background:#8a8a8a"></div><div class="t" style="left:316.3px;top:141px;font-size:9.5px;color:#3a3a3a;transform:translate(-50%,-50%)">12</div><div class="a" style="left:321.0px;top:140.5px;width:1px;height:1px;background:#8a8a8a"></div><div class="a" style="left:326.2px;top:139.2px;width:1px;height:3.5px;background:#555"></div><div class="a" style="left:331.4px;top:140.5px;width:1px;height:1px;background:#8a8a8a"></div><div class="t" style="left:337.1px;top:141px;font-size:9.5px;color:#3a3a3a;transform:translate(-50%,-50%)">11</div><div class="a" style="left:341.8px;top:140.5px;width:1px;height:1px;background:#8a8a8a"></div><div class="a" style="left:347.0px;top:139.2px;width:1px;height:3.5px;background:#555"></div><div class="a" style="left:352.2px;top:140.5px;width:1px;height:1px;background:#8a8a8a"></div><div class="t" style="left:357.9px;top:141px;font-size:9.5px;color:#3a3a3a;transform:translate(-50%,-50%)">10</div><div class="a" style="left:362.6px;top:140.5px;width:1px;height:1px;background:#8a8a8a"></div><div class="a" style="left:367.8px;top:139.2px;width:1px;height:3.5px;background:#555"></div><div class="a" style="left:373.0px;top:140.5px;width:1px;height:1px;background:#8a8a8a"></div><div class="t" style="left:378.7px;top:141px;font-size:9.5px;color:#3a3a3a;transform:translate(-50%,-50%)">9</div><div class="a" style="left:383.4px;top:140.5px;width:1px;height:1px;background:#8a8a8a"></div><div class="a" style="left:388.6px;top:139.2px;width:1px;height:3.5px;background:#555"></div><div class="a" style="left:393.8px;top:140.5px;width:1px;height:1px;background:#8a8a8a"></div><div class="t" style="left:399.5px;top:141px;font-size:9.5px;color:#3a3a3a;transform:translate(-50%,-50%)">8</div><div class="a" style="left:404.2px;top:140.5px;width:1px;height:1px;background:#8a8a8a"></div><div class="a" style="left:409.4px;top:139.2px;width:1px;height:3.5px;background:#555"></div><div class="a" style="left:414.6px;top:140.5px;width:1px;height:1px;background:#8a8a8a"></div><div class="t" style="left:420.3px;top:141px;font-size:9.5px;color:#3a3a3a;transform:translate(-50%,-50%)">7</div><div class="a" style="left:425.0px;top:140.5px;width:1px;height:1px;background:#8a8a8a"></div><div class="a" style="left:430.2px;top:139.2px;width:1px;height:3.5px;background:#555"></div><div class="a" style="left:435.4px;top:140.5px;width:1px;height:1px;background:#8a8a8a"></div><div class="t" style="left:441.1px;top:141px;font-size:9.5px;color:#3a3a3a;transform:translate(-50%,-50%)">6</div><div class="a" style="left:445.8px;top:140.5px;width:1px;height:1px;background:#8a8a8a"></div><div class="a" style="left:451.0px;top:139.2px;width:1px;height:3.5px;background:#555"></div><div class="a" style="left:456.2px;top:140.5px;width:1px;height:1px;background:#8a8a8a"></div><div class="t" style="left:461.9px;top:141px;font-size:9.5px;color:#3a3a3a;transform:translate(-50%,-50%)">5</div><div class="a" style="left:466.6px;top:140.5px;width:1px;height:1px;background:#8a8a8a"></div><div class="a" style="left:471.8px;top:139.2px;width:1px;height:3.5px;background:#555"></div><div class="a" style="left:477.0px;top:140.5px;width:1px;height:1px;background:#8a8a8a"></div><div class="t" style="left:482.7px;top:141px;font-size:9.5px;color:#3a3a3a;transform:translate(-50%,-50%)">4</div><div class="a" style="left:487.4px;top:140.5px;width:1px;height:1px;background:#8a8a8a"></div><div class="a" style="left:492.6px;top:139.2px;width:1px;height:3.5px;background:#555"></div><div class="a" style="left:497.8px;top:140.5px;width:1px;height:1px;background:#8a8a8a"></div><div class="t" style="left:503.5px;top:141px;font-size:9.5px;color:#3a3a3a;transform:translate(-50%,-50%)">3</div><div class="a" style="left:508.2px;top:140.5px;width:1px;height:1px;background:#8a8a8a"></div><div class="a" style="left:513.4px;top:139.2px;width:1px;height:3.5px;background:#555"></div><div class="a" style="left:518.6px;top:140.5px;width:1px;height:1px;background:#8a8a8a"></div><div class="t" style="left:524.3px;top:141px;font-size:9.5px;color:#3a3a3a;transform:translate(-50%,-50%)">2</div><div class="a" style="left:529.0px;top:140.5px;width:1px;height:1px;background:#8a8a8a"></div><div class="a" style="left:534.2px;top:139.2px;width:1px;height:3.5px;background:#555"></div><div class="a" style="left:539.4px;top:140.5px;width:1px;height:1px;background:#8a8a8a"></div><div class="t" style="left:545.1px;top:141px;font-size:9.5px;color:#3a3a3a;transform:translate(-50%,-50%)">1</div><div class="a" style="left:549.8px;top:140.5px;width:1px;height:1px;background:#8a8a8a"></div><div class="a" style="left:555.0px;top:139.2px;width:1px;height:3.5px;background:#555"></div><div class="a" style="left:560.2px;top:140.5px;width:1px;height:1px;background:#8a8a8a"></div><div class="t" style="left:565.9px;top:141px;font-size:9.5px;color:#3a3a3a;transform:translate(-50%,-50%)">0</div><div class="a" style="left:570.6px;top:140.5px;width:1px;height:1px;background:#8a8a8a"></div><div class="a" style="left:575.8px;top:139.2px;width:1px;height:3.5px;background:#555"></div><div class="a" style="left:581.0px;top:140.5px;width:1px;height:1px;background:#8a8a8a"></div><div class="t" style="left:586.7px;top:141px;font-size:9.5px;color:#3a3a3a;transform:translate(-50%,-50%)">1</div><div class="a" style="left:591.4px;top:140.5px;width:1px;height:1px;background:#8a8a8a"></div><div class="a" style="left:596.6px;top:139.2px;width:1px;height:3.5px;background:#555"></div><div class="a" style="left:601.8px;top:140.5px;width:1px;height:1px;background:#8a8a8a"></div><div class="t" style="left:607.5px;top:141px;font-size:9.5px;color:#3a3a3a;transform:translate(-50%,-50%)">2</div><div class="a" style="left:612.2px;top:140.5px;width:1px;height:1px;background:#8a8a8a"></div><div class="a" style="left:617.4px;top:139.2px;width:1px;height:3.5px;background:#555"></div><div class="a" style="left:622.6px;top:140.5px;width:1px;height:1px;background:#8a8a8a"></div><div class="t" style="left:628.3px;top:141px;font-size:9.5px;color:#3a3a3a;transform:translate(-50%,-50%)">3</div><div class="a" style="left:633.0px;top:140.5px;width:1px;height:1px;background:#8a8a8a"></div><div class="a" style="left:638.2px;top:139.2px;width:1px;height:3.5px;background:#555"></div><div class="a" style="left:643.4px;top:140.5px;width:1px;height:1px;background:#8a8a8a"></div><div class="t" style="left:649.1px;top:141px;font-size:9.5px;color:#3a3a3a;transform:translate(-50%,-50%)">4</div><div class="a" style="left:653.8px;top:140.5px;width:1px;height:1px;background:#8a8a8a"></div><div class="a" style="left:659.0px;top:139.2px;width:1px;height:3.5px;background:#555"></div><div class="a" style="left:664.2px;top:140.5px;width:1px;height:1px;background:#8a8a8a"></div><div class="t" style="left:669.9px;top:141px;font-size:9.5px;color:#3a3a3a;transform:translate(-50%,-50%)">5</div><div class="a" style="left:674.6px;top:140.5px;width:1px;height:1px;background:#8a8a8a"></div><div class="a" style="left:679.8px;top:139.2px;width:1px;height:3.5px;background:#555"></div><div class="a" style="left:685.0px;top:140.5px;width:1px;height:1px;background:#8a8a8a"></div><div class="t" style="left:690.7px;top:141px;font-size:9.5px;color:#3a3a3a;transform:translate(-50%,-50%)">6</div><div class="a" style="left:695.4px;top:140.5px;width:1px;height:1px;background:#8a8a8a"></div><div class="a" style="left:700.6px;top:139.2px;width:1px;height:3.5px;background:#555"></div><div class="a" style="left:705.8px;top:140.5px;width:1px;height:1px;background:#8a8a8a"></div><div class="t" style="left:711.5px;top:141px;font-size:9.5px;color:#3a3a3a;transform:translate(-50%,-50%)">7</div><div class="a" style="left:716.2px;top:140.5px;width:1px;height:1px;background:#8a8a8a"></div><div class="a" style="left:721.4px;top:139.2px;width:1px;height:3.5px;background:#555"></div><div class="a" style="left:726.6px;top:140.5px;width:1px;height:1px;background:#8a8a8a"></div><div class="t" style="left:732.3px;top:141px;font-size:9.5px;color:#3a3a3a;transform:translate(-50%,-50%)">8</div><div class="a" style="left:737.0px;top:140.5px;width:1px;height:1px;background:#8a8a8a"></div><div class="a" style="left:742.2px;top:139.2px;width:1px;height:3.5px;background:#555"></div><div class="a" style="left:747.4px;top:140.5px;width:1px;height:1px;background:#8a8a8a"></div><div class="t" style="left:753.1px;top:141px;font-size:9.5px;color:#3a3a3a;transform:translate(-50%,-50%)">9</div><div class="a" style="left:757.8px;top:140.5px;width:1px;height:1px;background:#8a8a8a"></div><div class="a" style="left:763.0px;top:139.2px;width:1px;height:3.5px;background:#555"></div><div class="a" style="left:768.2px;top:140.5px;width:1px;height:1px;background:#8a8a8a"></div><div class="t" style="left:773.9px;top:141px;font-size:9.5px;color:#3a3a3a;transform:translate(-50%,-50%)">10</div><div class="a" style="left:778.6px;top:140.5px;width:1px;height:1px;background:#8a8a8a"></div><div class="a" style="left:783.8px;top:139.2px;width:1px;height:3.5px;background:#555"></div><div class="a" style="left:789.0px;top:140.5px;width:1px;height:1px;background:#8a8a8a"></div><div class="t" style="left:794.7px;top:141px;font-size:9.5px;color:#3a3a3a;transform:translate(-50%,-50%)">11</div><div class="a" style="left:799.4px;top:140.5px;width:1px;height:1px;background:#8a8a8a"></div><div class="a" style="left:804.6px;top:139.2px;width:1px;height:3.5px;background:#555"></div><div class="a" style="left:809.8px;top:140.5px;width:1px;height:1px;background:#8a8a8a"></div><div class="t" style="left:815.5px;top:141px;font-size:9.5px;color:#3a3a3a;transform:translate(-50%,-50%)">12</div><div class="a" style="left:820.2px;top:140.5px;width:1px;height:1px;background:#8a8a8a"></div><div class="a" style="left:825.4px;top:139.2px;width:1px;height:3.5px;background:#555"></div><div class="a" style="left:830.6px;top:140.5px;width:1px;height:1px;background:#8a8a8a"></div><div class="t" style="left:836.3px;top:141px;font-size:9.5px;color:#3a3a3a;transform:translate(-50%,-50%)">13</div><div class="a" style="left:841.0px;top:140.5px;width:1px;height:1px;background:#8a8a8a"></div><div class="a" style="left:846.2px;top:139.2px;width:1px;height:3.5px;background:#555"></div><div class="a" style="left:851.4px;top:140.5px;width:1px;height:1px;background:#8a8a8a"></div><div class="t" style="left:857.1px;top:141px;font-size:9.5px;color:#3a3a3a;transform:translate(-50%,-50%)">14</div><div class="a" style="left:861.8px;top:140.5px;width:1px;height:1px;background:#8a8a8a"></div><div class="a" style="left:867.0px;top:139.2px;width:1px;height:3.5px;background:#555"></div><div class="a" style="left:872.2px;top:140.5px;width:1px;height:1px;background:#8a8a8a"></div><div class="t" style="left:877.9px;top:141px;font-size:9.5px;color:#3a3a3a;transform:translate(-50%,-50%)">15</div><div class="a" style="left:882.6px;top:140.5px;width:1px;height:1px;background:#8a8a8a"></div><div class="a" style="left:887.8px;top:139.2px;width:1px;height:3.5px;background:#555"></div><div class="a" style="left:893.0px;top:140.5px;width:1px;height:1px;background:#8a8a8a"></div><div class="t" style="left:898.7px;top:141px;font-size:9.5px;color:#3a3a3a;transform:translate(-50%,-50%)">16</div><div class="a" style="left:903.4px;top:140.5px;width:1px;height:1px;background:#8a8a8a"></div><div class="a" style="left:908.6px;top:139.2px;width:1px;height:3.5px;background:#555"></div><div class="a" style="left:913.8px;top:140.5px;width:1px;height:1px;background:#8a8a8a"></div>
<div class="a" style="left:186px;top:198px;width:9px;height:395px;background:#fff"></div>
<div class="a" style="left:190px;top:203.3px;width:1px;height:1px;background:#8a8a8a"></div><div class="t" style="left:190.5px;top:209.0px;font-size:9.5px;color:#3a3a3a;transform:translate(-50%,-50%) rotate(-90deg)">9</div><div class="a" style="left:190px;top:213.7px;width:1px;height:1px;background:#8a8a8a"></div><div class="a" style="left:188.8px;top:218.9px;width:3.5px;height:1px;background:#555"></div><div class="a" style="left:190px;top:224.1px;width:1px;height:1px;background:#8a8a8a"></div><div class="t" style="left:190.5px;top:229.8px;font-size:9.5px;color:#3a3a3a;transform:translate(-50%,-50%) rotate(-90deg)">8</div><div class="a" style="left:190px;top:234.5px;width:1px;height:1px;background:#8a8a8a"></div><div class="a" style="left:188.8px;top:239.7px;width:3.5px;height:1px;background:#555"></div><div class="a" style="left:190px;top:244.9px;width:1px;height:1px;background:#8a8a8a"></div><div class="t" style="left:190.5px;top:250.6px;font-size:9.5px;color:#3a3a3a;transform:translate(-50%,-50%) rotate(-90deg)">7</div><div class="a" style="left:190px;top:255.3px;width:1px;height:1px;background:#8a8a8a"></div><div class="a" style="left:188.8px;top:260.5px;width:3.5px;height:1px;background:#555"></div><div class="a" style="left:190px;top:265.7px;width:1px;height:1px;background:#8a8a8a"></div><div class="t" style="left:190.5px;top:271.4px;font-size:9.5px;color:#3a3a3a;transform:translate(-50%,-50%) rotate(-90deg)">6</div><div class="a" style="left:190px;top:276.1px;width:1px;height:1px;background:#8a8a8a"></div><div class="a" style="left:188.8px;top:281.3px;width:3.5px;height:1px;background:#555"></div><div class="a" style="left:190px;top:286.5px;width:1px;height:1px;background:#8a8a8a"></div><div class="t" style="left:190.5px;top:292.2px;font-size:9.5px;color:#3a3a3a;transform:translate(-50%,-50%) rotate(-90deg)">5</div><div class="a" style="left:190px;top:296.9px;width:1px;height:1px;background:#8a8a8a"></div><div class="a" style="left:188.8px;top:302.1px;width:3.5px;height:1px;background:#555"></div><div class="a" style="left:190px;top:307.3px;width:1px;height:1px;background:#8a8a8a"></div><div class="t" style="left:190.5px;top:313.0px;font-size:9.5px;color:#3a3a3a;transform:translate(-50%,-50%) rotate(-90deg)">4</div><div class="a" style="left:190px;top:317.7px;width:1px;height:1px;background:#8a8a8a"></div><div class="a" style="left:188.8px;top:322.9px;width:3.5px;height:1px;background:#555"></div><div class="a" style="left:190px;top:328.1px;width:1px;height:1px;background:#8a8a8a"></div><div class="t" style="left:190.5px;top:333.8px;font-size:9.5px;color:#3a3a3a;transform:translate(-50%,-50%) rotate(-90deg)">3</div><div class="a" style="left:190px;top:338.5px;width:1px;height:1px;background:#8a8a8a"></div><div class="a" style="left:188.8px;top:343.7px;width:3.5px;height:1px;background:#555"></div><div class="a" style="left:190px;top:348.9px;width:1px;height:1px;background:#8a8a8a"></div><div class="t" style="left:190.5px;top:354.6px;font-size:9.5px;color:#3a3a3a;transform:translate(-50%,-50%) rotate(-90deg)">2</div><div class="a" style="left:190px;top:359.3px;width:1px;height:1px;background:#8a8a8a"></div><div class="a" style="left:188.8px;top:364.5px;width:3.5px;height:1px;background:#555"></div><div class="a" style="left:190px;top:369.7px;width:1px;height:1px;background:#8a8a8a"></div><div class="t" style="left:190.5px;top:375.4px;font-size:9.5px;color:#3a3a3a;transform:translate(-50%,-50%) rotate(-90deg)">1</div><div class="a" style="left:190px;top:380.1px;width:1px;height:1px;background:#8a8a8a"></div><div class="a" style="left:188.8px;top:385.3px;width:3.5px;height:1px;background:#555"></div><div class="a" style="left:190px;top:390.5px;width:1px;height:1px;background:#8a8a8a"></div><div class="t" style="left:190.5px;top:396.2px;font-size:9.5px;color:#3a3a3a;transform:translate(-50%,-50%) rotate(-90deg)">0</div><div class="a" style="left:190px;top:400.9px;width:1px;height:1px;background:#8a8a8a"></div><div class="a" style="left:188.8px;top:406.1px;width:3.5px;height:1px;background:#555"></div><div class="a" style="left:190px;top:411.3px;width:1px;height:1px;background:#8a8a8a"></div><div class="t" style="left:190.5px;top:417.0px;font-size:9.5px;color:#3a3a3a;transform:translate(-50%,-50%) rotate(-90deg)">1</div><div class="a" style="left:190px;top:421.7px;width:1px;height:1px;background:#8a8a8a"></div><div class="a" style="left:188.8px;top:426.9px;width:3.5px;height:1px;background:#555"></div><div class="a" style="left:190px;top:432.1px;width:1px;height:1px;background:#8a8a8a"></div><div class="t" style="left:190.5px;top:437.8px;font-size:9.5px;color:#3a3a3a;transform:translate(-50%,-50%) rotate(-90deg)">2</div><div class="a" style="left:190px;top:442.5px;width:1px;height:1px;background:#8a8a8a"></div><div class="a" style="left:188.8px;top:447.7px;width:3.5px;height:1px;background:#555"></div><div class="a" style="left:190px;top:452.9px;width:1px;height:1px;background:#8a8a8a"></div><div class="t" style="left:190.5px;top:458.6px;font-size:9.5px;color:#3a3a3a;transform:translate(-50%,-50%) rotate(-90deg)">3</div><div class="a" style="left:190px;top:463.3px;width:1px;height:1px;background:#8a8a8a"></div><div class="a" style="left:188.8px;top:468.5px;width:3.5px;height:1px;background:#555"></div><div class="a" style="left:190px;top:473.7px;width:1px;height:1px;background:#8a8a8a"></div><div class="t" style="left:190.5px;top:479.4px;font-size:9.5px;color:#3a3a3a;transform:translate(-50%,-50%) rotate(-90deg)">4</div><div class="a" style="left:190px;top:484.1px;width:1px;height:1px;background:#8a8a8a"></div><div class="a" style="left:188.8px;top:489.3px;width:3.5px;height:1px;background:#555"></div><div class="a" style="left:190px;top:494.5px;width:1px;height:1px;background:#8a8a8a"></div><div class="t" style="left:190.5px;top:500.2px;font-size:9.5px;color:#3a3a3a;transform:translate(-50%,-50%) rotate(-90deg)">5</div><div class="a" style="left:190px;top:504.9px;width:1px;height:1px;background:#8a8a8a"></div><div class="a" style="left:188.8px;top:510.1px;width:3.5px;height:1px;background:#555"></div><div class="a" style="left:190px;top:515.3px;width:1px;height:1px;background:#8a8a8a"></div><div class="t" style="left:190.5px;top:521.0px;font-size:9.5px;color:#3a3a3a;transform:translate(-50%,-50%) rotate(-90deg)">6</div><div class="a" style="left:190px;top:525.7px;width:1px;height:1px;background:#8a8a8a"></div><div class="a" style="left:188.8px;top:530.9px;width:3.5px;height:1px;background:#555"></div><div class="a" style="left:190px;top:536.1px;width:1px;height:1px;background:#8a8a8a"></div><div class="t" style="left:190.5px;top:541.8px;font-size:9.5px;color:#3a3a3a;transform:translate(-50%,-50%) rotate(-90deg)">7</div><div class="a" style="left:190px;top:546.5px;width:1px;height:1px;background:#8a8a8a"></div><div class="a" style="left:188.8px;top:551.7px;width:3.5px;height:1px;background:#555"></div><div class="a" style="left:190px;top:556.9px;width:1px;height:1px;background:#8a8a8a"></div><div class="t" style="left:190.5px;top:562.6px;font-size:9.5px;color:#3a3a3a;transform:translate(-50%,-50%) rotate(-90deg)">8</div><div class="a" style="left:190px;top:567.3px;width:1px;height:1px;background:#8a8a8a"></div><div class="a" style="left:188.8px;top:572.5px;width:3.5px;height:1px;background:#555"></div><div class="a" style="left:190px;top:577.7px;width:1px;height:1px;background:#8a8a8a"></div><div class="t" style="left:190.5px;top:583.4px;font-size:9.5px;color:#3a3a3a;transform:translate(-50%,-50%) rotate(-90deg)">9</div><div class="a" style="left:190px;top:588.1px;width:1px;height:1px;background:#8a8a8a"></div>
<div class="a" style="left:930px;top:133px;width:10px;height:507px;background:#f0f0f0"></div>
<div class="a" style="left:930px;top:134px;width:10px;height:11px;background:#fff;border:1px solid #adadad"></div>
<svg class="a" style="left:932px;top:137px;" width="6" height="4" viewBox="0 0 6 4"><path d="M0 3.5 L3 0.5 L6 3.5 Z" fill="#222"/></svg>
<div class="a" style="left:930px;top:182px;width:10px;height:37px;background:#fff;border:1px solid #adadad"></div>
<div class="a" style="left:930px;top:595px;width:10px;height:10px;background:#fff;border:1px solid #adadad"></div>
<svg class="a" style="left:932px;top:598px;" width="6" height="4" viewBox="0 0 6 4"><path d="M0 0.5 L3 3.5 L6 0.5 Z" fill="#222"/></svg>
<div class="a" style="left:929px;top:606px;width:11px;height:34px;background:#e6e6e6"></div>
<svg class="a" style="left:931px;top:608px;" width="7" height="9" viewBox="0 0 7 9"><path d="M3.5 0 L7 4 H0 Z M3.5 4 L7 8 H0 Z" fill="#555"/></svg>
<svg class="a" style="left:931px;top:618px;" width="7" height="9" viewBox="0 0 7 9"><path d="M0 0 H7 L3.5 4 Z M0 4 H7 L3.5 8 Z" fill="#555"/></svg>
<div class="a" style="left:213px;top:197px;width:705px;height:397px;background:#fff;box-shadow:0 0 0 1px #d4d4d4"></div>
<div class="a" style="left:301px;top:263px;width:529px;height:139px;border:1px dotted #a0a0a0"></div>
<div class="a" style="left:301px;top:405px;width:529px;height:97px;border:1px dotted #a0a0a0"></div>
<div class="t" id="t57" style="left:567.1px;top:323px;font-size:41px;color:#111;transform-origin:50% 50%;transform:translate(-50%,-50%) scaleX(1.0563);-webkit-text-stroke:1px #fff">マスター タイトルの書式</div>
<div class="t" id="t58" style="left:566.5px;top:370px;font-size:43px;color:#111;transform-origin:50% 50%;transform:translate(-50%,-50%) scaleX(1.0233);-webkit-text-stroke:1px #fff">設定</div>
<div class="t" id="t59" style="left:566.5px;top:416.9px;font-size:16.5px;color:#262626;transform-origin:50% 50%;transform:translate(-50%,-50%) scaleX(1.0382);">マスター サブタイトルの書式設定</div>
<div class="a" style="left:261px;top:564px;width:160px;height:23px;border:1px dotted #9c9c9c"></div>
<div class="t" id="t60" style="left:267px;top:574.8px;font-size:11px;color:#a2a2a2;transform-origin:0 50%;transform:translateY(-50%) scaleX(0.8536);-webkit-text-stroke:0">2023/10/21</div>
<div class="a" style="left:446px;top:564px;width:239px;height:23px;border:1px dotted #9c9c9c"></div>
<div class="t" id="t61" style="left:565.7px;top:575.4px;font-size:10px;color:#a0a0a0;transform-origin:50% 50%;transform:translate(-50%,-50%) scaleX(0.8250);-webkit-text-stroke:0">フッター</div>
<div class="a" style="left:710px;top:564px;width:160px;height:23px;border:1px dotted #9c9c9c"></div>
<div class="t" id="t62" style="left:864px;top:575.3px;font-size:9px;color:#9a9a9a;transform-origin:100% 50%;transform:translate(-100%,-50%) scaleX(0.9273);-webkit-text-stroke:0">‹#›</div>
<div class="a" style="left:565px;top:147px;width:1px;height:493px;background:repeating-linear-gradient(to bottom,#f8be78 0 2px,transparent 2px 4px)"></div>
<div class="a" style="left:200px;top:396px;width:728px;height:1px;background:repeating-linear-gradient(to right,#f8be78 0 2px,transparent 2px 4px)"></div>
<div class="a" style="left:0px;top:640px;width:940px;height:14px;background:#f3f3f3;border-top:1px solid #e0e0e0"></div>
<div class="t" id="t63" style="left:5.9px;top:648px;font-size:9px;color:#444;-webkit-text-stroke:0.1px #444;transform-origin:0 50%;transform:translateY(-50%) scaleX(0.6710);">スライド マスター</div>
<svg class="a" style="left:69px;top:642px;" width="10" height="10" viewBox="0 0 10 10"><path d="M0.5 1 H4 L5 2 L6 1 H9.5 V8.5 H6 L5 9.5 L4 8.5 H0.5 Z M5 2 V9.5" fill="none" stroke="#555" stroke-width="0.9"/></svg>
<div class="t" id="t64" style="left:90.4px;top:648px;font-size:9px;color:#444;-webkit-text-stroke:0.1px #444;transform-origin:0 50%;transform:translateY(-50%) scaleX(0.8667);">日本語</div>
<svg class="a" style="left:126px;top:642px;" width="10" height="10" viewBox="0 0 10 10"><circle cx="4" cy="2" r="1.5" fill="none" stroke="#555"/><path d="M1 4 H7 M4 4 V7 L2 10 M4 7 L6 10 M7 7 L9 9.5" fill="none" stroke="#555" stroke-width="0.9"/></svg>
<div class="t" id="t65" style="left:138.3px;top:648px;font-size:9px;color:#444;-webkit-text-stroke:0.1px #444;transform-origin:0 50%;transform:translateY(-50%) scaleX(0.7085);">アクセシビリティ: 問題ありません</div>
<svg class="a" style="left:696px;top:642px;" width="11" height="10" viewBox="0 0 11 10"><rect x="0.5" y="0.5" width="10" height="9" fill="none" stroke="#555"/><rect x="3" y="2.5" width="5.5" height="5" fill="none" stroke="#555" stroke-width="0.8"/><line x1="1.5" y1="3" x2="1.5" y2="7" stroke="#555"/></svg>
<svg class="a" style="left:723px;top:642px;" width="11" height="10" viewBox="0 0 11 10"><rect x="0.5" y="0.5" width="4" height="3.5" fill="none" stroke="#555"/><rect x="6.5" y="0.5" width="4" height="3.5" fill="none" stroke="#555"/><rect x="0.5" y="5.5" width="4" height="3.5" fill="none" stroke="#555"/><rect x="6.5" y="5.5" width="4" height="3.5" fill="none" stroke="#555"/></svg>
<svg class="a" style="left:750px;top:642px;" width="11" height="10" viewBox="0 0 11 10"><path d="M0.5 0.5 H4.5 L5.5 1.5 L6.5 0.5 H10.5 V9.5 H0.5 Z M5.5 1.5 V9.5" fill="none" stroke="#555"/><path d="M2 3 V8 M9 3 V8" stroke="#555" stroke-width="0.8"/></svg>
<svg class="a" style="left:777px;top:642px;" width="10" height="11" viewBox="0 0 10 11"><rect x="0.5" y="0.5" width="9" height="6" fill="none" stroke="#555"/><path d="M5 6.5 V10 M3 10.5 H7" stroke="#555"/></svg>
<div class="a" style="left:800px;top:647.5px;width:5px;height:1px;background:#666"></div>
<div class="a" style="left:809px;top:648px;width:67px;height:1px;background:#808080"></div>
<div class="a" style="left:834.4px;top:644.4px;width:3.5px;height:7.6px;background:#3a3a3a"></div>
<div class="a" style="left:842.5px;top:646px;width:1px;height:4px;background:#808080"></div>
<div class="a" style="left:879.7px;top:647.5px;width:5.5px;height:1px;background:#777"></div>
<div class="a" style="left:882px;top:645px;width:1px;height:5.5px;background:#777"></div>
<div class="t" id="t66" style="left:892.7px;top:648px;font-size:9.5px;color:#444;transform-origin:0 50%;transform:translateY(-50%) scaleX(0.9466);">82%</div>
<svg class="a" style="left:919.5px;top:644px;" width="11" height="9" viewBox="0 0 11 9"><rect x="3" y="2" width="5" height="5" fill="none" stroke="#666" stroke-width="0.9"/><path d="M5.5 0 L4.3 1.3 H6.7 Z M5.5 9 L4.3 7.7 H6.7 Z M0 4.5 L1.5 3.3 V5.7 Z M11 4.5 L9.5 3.3 V5.7 Z" fill="#666"/></svg>
<div class="a" style="left:0px;top:23px;width:1px;height:631px;background:#c46e58"></div>
<div class="a" style="left:1px;top:23px;width:1px;height:631px;background:#e9eef0"></div>
</body></html>
